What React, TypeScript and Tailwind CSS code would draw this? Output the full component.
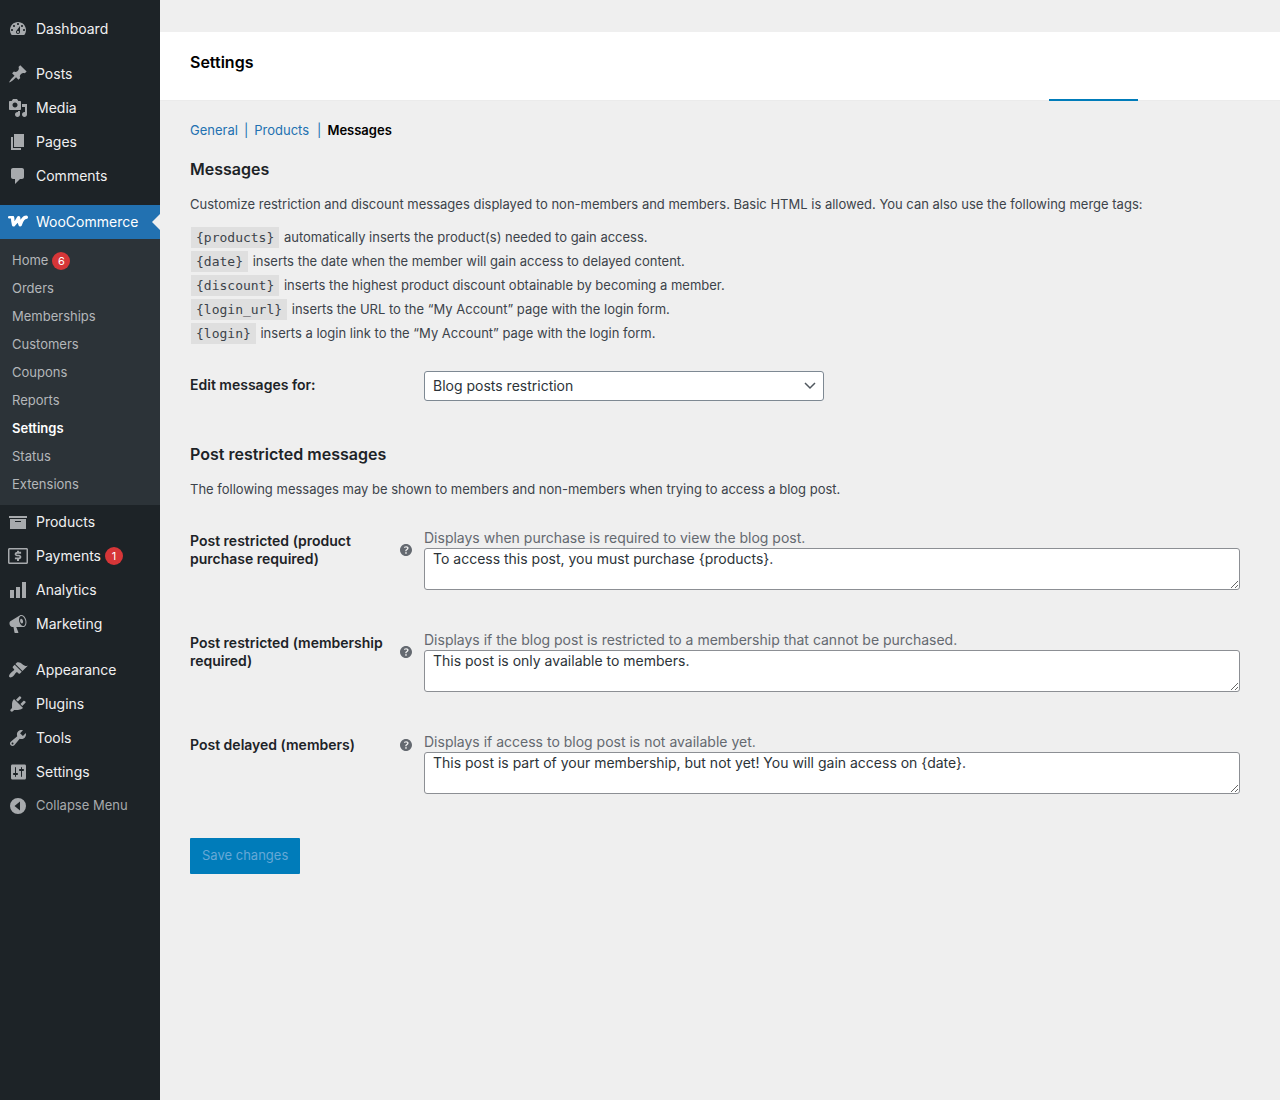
import React from "react";

const ICONS = {
  dashboard:
    "M3.76 16h12.48c1.1-1.37 1.76-3.11 1.76-5 0-4.42-3.58-8-8-8s-8 3.58-8 8c0 1.89.66 3.63 1.76 5zM10 4c.55 0 1 .45 1 1s-.45 1-1 1-1-.45-1-1 .45-1 1-1zM6 6c.55 0 1 .45 1 1s-.45 1-1 1-1-.45-1-1 .45-1 1-1zm8 0c.55 0 1 .45 1 1s-.45 1-1 1-1-.45-1-1 .45-1 1-1zm-5.37 5.55L12 7v6c0 1.1-.9 2-2 2s-2-.9-2-2c0-.57.24-1.08.63-1.45zM4 10c.55 0 1 .45 1 1s-.45 1-1 1-1-.45-1-1 .45-1 1-1zm12 0c.55 0 1 .45 1 1s-.45 1-1 1-1-.45-1-1 .45-1 1-1zm-5 3c0-.55-.45-1-1-1s-1 .45-1 1 .45 1 1 1 1-.45 1-1z",
  post: "M10.44 3.02l1.82-1.82 6.36 6.35-1.83 1.82c-1.05-.68-2.48-.57-3.41.36l-.75.75c-.92.93-1.04 2.35-.35 3.41l-1.83 1.82-2.41-2.41-2.8 2.79c-.42.42-3.38 2.71-3.8 2.29s1.86-3.39 2.28-3.81l2.79-2.79L4.1 9.36l1.83-1.82c1.05.69 2.48.57 3.4-.36l.75-.75c.93-.92 1.05-2.35.36-3.41z",
  media:
    "M13 11V4c0-.55-.45-1-1-1h-1.67L9 1H5L3.67 3H2c-.55 0-1 .45-1 1v7c0 .55.45 1 1 1h10c.55 0 1-.45 1-1zM7 4.5c1.38 0 2.5 1.12 2.5 2.5S8.38 9.5 7 9.5 4.5 8.38 4.5 7 5.62 4.5 7 4.5zM14 6h5v10.5c0 1.38-1.12 2.5-2.5 2.5S14 17.88 14 16.5s1.12-2.5 2.5-2.5c.17 0 .34.02.5.05V9h-3V6zm-4 8.05V13h2v3.5c0 1.38-1.12 2.5-2.5 2.5S7 17.88 7 16.5 8.12 14 9.5 14c.17 0 .34.02.5.05z",
  page: "M6 15V2h10v13H6zm-1 1h8v2H3V5h2v11z",
  comments: "M5 2h9c1.1 0 2 .9 2 2v7c0 1.1-.9 2-2 2h-2l-5 5v-5H5c-1.1 0-2-.9-2-2V4c0-1.1.9-2 2-2z",
  archive: "M19 4v2H1V4h18zM2 7h16v10H2V7zm11 3V9H7v1h6z",
  payments:
    "M1.5 2h17c.83 0 1.5.67 1.5 1.5v13c0 .83-.67 1.5-1.5 1.5h-17C.67 18 0 17.33 0 16.5v-13C0 2.67.67 2 1.5 2zm0 1.5v13h17v-13h-17zM9 4.800h2v1.050h2.100v1.800H9.100c-.45 0-.75.2-.75.5s.3.5.75.5h1.800c1.350 0 2.450.95 2.450 2.300 0 1.200-.9 2.150-2.100 2.250H11V15H9v-1.800H6.900v-1.800h4c.45 0 .7-.25.7-.55s-.3-.55-.7-.55H9.100c-1.350 0-2.450-.9-2.450-2.200 0-1.150.8-2.050 1.950-2.200H9V4.800z",
  chart: "M18 18V2h-4v16h4zm-6 0V7H8v11h4zm-6 0v-8H2v8h4z",
  megaphone:
    "M18.15 5.94c.46 1.62.38 3.22-.02 4.48-.42 1.28-1.26 2.18-2.3 2.48-.16.06-.26.06-.4.06-.06.02-.12.02-.18.02-.06.02-.14.02-.22.02h-6.8l2.22 5.5c.02.14-.06.26-.14.34-.08.1-.24.16-.34.16H6.95c-.1 0-.26-.06-.34-.16-.08-.08-.16-.2-.14-.34l-1-5.5H4.25l-.02-.02c-.5.06-1.08-.18-1.54-.62s-.88-1.08-1.06-1.88c-.24-.8-.2-1.56-.02-2.2.18-.62.58-1.08 1.06-1.3l.02-.02 9-5.4c.1-.06.18-.1.24-.16.06-.04.14-.08.24-.12.16-.08.28-.12.5-.18 1.04-.3 2.24.1 3.22.98s1.84 2.24 2.26 3.86zm-2.58 5.98h-.02c.4-.1.74-.34 1.04-.7.58-.7.86-1.76.86-3.04 0-.64-.1-1.3-.28-1.98-.34-1.36-1.02-2.5-1.78-3.24s-1.68-1.1-2.46-.88c-.82.22-1.4.96-1.7 2-.32 1.04-.28 2.36.06 3.72.38 1.36 1 2.5 1.8 3.24.78.74 1.62 1.1 2.48.88zm-2.54-7.08c.22-.04.42-.02.62.04.38.16.76.48 1.02 1s.42 1.2.42 1.78c0 .3-.04.56-.12.8-.18.48-.44.84-.86.94-.34.1-.8-.06-1.14-.4s-.64-.86-.78-1.5c-.18-.62-.12-1.24.02-1.72s.48-.84.82-.94z",
  appearance:
    "M14.48 11.06L7.41 3.99l1.5-1.5c.5-.56 2.3-.47 3.51.32 1.21.8 1.43 1.28 2.91 2.1 1.18.64 2.45 1.26 4.45.85zm-.71.71L6.7 4.7 4.93 6.47c-.39.39-.39 1.02 0 1.41l1.06 1.06c.39.39.39 1.03 0 1.42-.6.6-1.43 1.11-2.21 1.69-.35.26-.7.53-1.01.84C1.43 14.23.4 16.08 1.4 17.07c.99 1 2.84-.03 4.18-1.36.31-.31.58-.66.85-1.02.57-.78 1.08-1.61 1.69-2.21.39-.39 1.02-.39 1.41 0l1.06 1.06c.39.39 1.02.39 1.41 0z",
  plugins:
    "M13.11 4.36L9.87 7.6 8 5.73l3.24-3.24c.35-.34 1.05-.2 1.56.32.52.51.66 1.21.31 1.55zm-8 1.77l.91-1.12 9.01 9.01-1.19.84c-.71.71-2.63 1.16-3.82 1.16H6.14L4.9 17.26c-.59.59-1.54.59-2.12 0-.59-.58-.59-1.53 0-2.12l1.24-1.24v-3.88c0-1.13.4-3.19 1.09-3.89zm7.26 3.97l3.24-3.24c.34-.35 1.04-.21 1.55.31.52.51.66 1.21.31 1.55l-3.24 3.25z",
  tools:
    "M16.68 9.77c-1.34 1.34-3.3 1.67-4.95.99l-5.41 6.52c-.99.99-2.59.99-3.58 0s-.99-2.59 0-3.57l6.52-5.42c-.68-1.65-.35-3.61.99-4.95 1.28-1.28 3.12-1.62 4.72-1.06l-2.89 2.89 2.82 2.82 2.86-2.87c.53 1.58.18 3.39-1.08 4.65zM3.81 16.21c.4.39 1.04.39 1.43 0 .4-.4.4-1.04 0-1.43-.39-.4-1.03-.4-1.43 0-.39.39-.39 1.03 0 1.43z",
  settings:
    "M18 16V4c0-.8-.5-1.5-1.5-1.5h-12C3.5 2.5 3 3.2 3 4v12c0 .8.5 1.5 1.5 1.5h12c1 0 1.5-.7 1.5-1.5zM8 11h1c.55 0 1 .45 1 1s-.45 1-1 1H8v1.5c0 .28-.22.5-.5.5s-.5-.22-.5-.5V13H6c-.55 0-1-.45-1-1s.45-1 1-1h1V5.5c0-.28.22-.5.5-.5s.5.22.5.5V11zm5-2h-1c-.55 0-1-.45-1-1s.45-1 1-1h1V5.5c0-.28.22-.5.5-.5s.5.22.5.5V7h1c.55 0 1 .45 1 1s-.45 1-1 1h-1v5.5c0 .28-.22.5-.5.5s-.5-.22-.5-.5V9z",
  collapse: "M10 2a8 8 0 1 1 0 16 8 8 0 0 1 0-16zM12 5.5L6.5 10l5.5 4.5v-9z",
  help: "M17 10c0-3.87-3.14-7-7-7-3.87 0-7 3.13-7 7s3.13 7 7 7c3.86 0 7-3.13 7-7zm-6.3 1.48H9.14v-.43c0-.38.08-.7.24-.98s.46-.57.88-.89c.41-.29.68-.53.81-.71.14-.18.2-.39.2-.62 0-.25-.09-.44-.28-.58-.19-.13-.45-.19-.79-.19-.58 0-1.25.19-2 .57l-.64-1.28c.87-.49 1.8-.74 2.77-.74.81 0 1.45.2 1.92.58.48.39.71.91.71 1.55 0 .43-.09.8-.29 1.11-.19.32-.57.67-1.11 1.06-.38.28-.61.49-.71.63-.1.15-.15.34-.15.57v.35zm-1.47 2.74c-.18-.17-.27-.42-.27-.73 0-.33.08-.58.26-.75s.43-.25.77-.25c.32 0 .57.09.75.26s.27.42.27.74c0 .3-.09.55-.27.72-.18.18-.43.27-.75.27-.33 0-.58-.09-.76-.26z",
};

type IconName = keyof typeof ICONS;

function MenuIcon({ name }: { name: IconName }) {
  return (
    <svg viewBox="0 0 20 20" className="size-5 shrink-0 fill-[#a7aaad]" aria-hidden="true">
      <path fillRule="evenodd" d={ICONS[name]} />
    </svg>
  );
}

function WooLogo() {
  return (
    <svg viewBox="0 0 20 20" className="size-5 shrink-0" fill="none" stroke="#fff" strokeLinejoin="round" strokeLinecap="round" aria-hidden="true">
      <path d="M1.200 5.200h3.600" strokeWidth="2.400" />
      <path d="M4.600 5.600Q4.600 9 5.600 12.800Q8 11 10.600 5.800Q10.800 9.500 12.200 12.800Q13.200 9 15.200 6.800Q16.500 5.300 18.300 5.200" strokeWidth="3.400" />
    </svg>
  );
}

function Badge({ children }: { children: React.ReactNode }) {
  return (
    <span className="flex size-[18px] items-center justify-center rounded-full bg-[#d63638] text-[11px] leading-4 text-white">
      {children}
    </span>
  );
}

function MenuItem({ icon, label, badge }: { icon: IconName; label: string; badge?: string }) {
  return (
    <li>
      <a href="#" className="flex h-[34px] items-center gap-2 px-2 text-sm text-[#f0f0f1]">
        <MenuIcon name={icon} />
        <span className="flex items-center gap-1">
          {label}
          {badge && <Badge>{badge}</Badge>}
        </span>
      </a>
    </li>
  );
}

const SUBMENU = ["Home", "Orders", "Memberships", "Customers", "Coupons", "Reports", "Settings", "Status", "Extensions"];

function Sidebar() {
  return (
    <nav aria-label="Main menu" className="w-40 shrink-0 bg-[#1d2327] pt-3">
      <ul>
        <MenuItem icon="dashboard" label="Dashboard" />
      </ul>
      <ul className="mt-[11px]">
        <MenuItem icon="post" label="Posts" />
        <MenuItem icon="media" label="Media" />
        <MenuItem icon="page" label="Pages" />
        <MenuItem icon="comments" label="Comments" />
      </ul>
      <ul className="mt-3">
        <li>
          <a href="#" className="relative flex h-[34px] items-center gap-2 bg-[#2271b1] px-2 text-sm text-white">
            <WooLogo />
            WooCommerce
            <span className="absolute top-1/2 right-0 -translate-y-1/2 border-y-8 border-r-8 border-y-transparent border-r-[#efefef]" />
          </a>
          <ul className="bg-[#2c3338] pt-2 pb-1.5 text-[13px]">
            {SUBMENU.map((label) => (
              <li key={label}>
                <a
                  href="#"
                  className={`flex h-7 items-center gap-1 px-3 ${label === "Settings" ? "font-semibold text-white" : "text-[#b4b7ba]"}`}
                >
                  {label}
                  {label === "Home" && <Badge>6</Badge>}
                </a>
              </li>
            ))}
          </ul>
        </li>
        <MenuItem icon="archive" label="Products" />
        <MenuItem icon="payments" label="Payments" badge="1" />
        <MenuItem icon="chart" label="Analytics" />
        <MenuItem icon="megaphone" label="Marketing" />
      </ul>
      <ul className="mt-3">
        <MenuItem icon="appearance" label="Appearance" />
        <MenuItem icon="plugins" label="Plugins" />
        <MenuItem icon="tools" label="Tools" />
        <MenuItem icon="settings" label="Settings" />
      </ul>
      <button type="button" className="flex h-[34px] w-full items-center gap-2 px-2 text-[13px] text-[#a7aaad]">
        <MenuIcon name="collapse" />
        Collapse Menu
      </button>
    </nav>
  );
}

const TAGS = [
  ["{products}", "automatically inserts the product(s) needed to gain access."],
  ["{date}", "inserts the date when the member will gain access to delayed content."],
  ["{discount}", "inserts the highest product discount obtainable by becoming a member."],
  ["{login_url}", "inserts the URL to the “My Account” page with the login form."],
  ["{login}", "inserts a login link to the “My Account” page with the login form."],
];

const FIELDS = [
  {
    id: "purchase",
    label: "Post restricted (product purchase required)",
    hint: "Displays when purchase is required to view the blog post.",
    value: "To access this post, you must purchase {products}.",
  },
  {
    id: "membership",
    label: "Post restricted (membership required)",
    hint: "Displays if the blog post is restricted to a membership that cannot be purchased.",
    value: "This post is only available to members.",
  },
  {
    id: "delayed",
    label: "Post delayed (members)",
    hint: "Displays if access to blog post is not available yet.",
    value: "This post is part of your membership, but not yet! You will gain access on {date}.",
  },
];

export default function App() {
  return (
    <div className="flex min-h-screen bg-[#efefef] font-['Inter',sans-serif] text-[13px] text-[#3c434a]">
      <Sidebar />
      <div className="min-w-0 flex-1 pt-8">
        <header className="relative h-[69px] border-b border-[#ebebeb] bg-white px-[30px] pt-[18px]">
          <h1 className="text-base font-semibold text-black">Settings</h1>
          <span className="absolute right-[142px] -bottom-px h-0.5 w-[89px] bg-[#007cba]" />
        </header>
        <main className="pr-10 pb-10 pl-[30px]">
          <nav aria-label="Sections" className="flex pt-[19px] leading-5 text-[#2271b1]">
            <a href="#">General</a>
            <span className="mx-1.5">|</span>
            <a href="#">Products</a>
            <span className="mr-1.5 ml-2">|</span>
            <a href="#" aria-current="page" className="font-semibold text-black">Messages</a>
          </nav>
          <h2 className="mt-[17px] text-base leading-6 font-semibold text-[#1d2327]">Messages</h2>
          <p className="mt-[13px] leading-5">
            Customize restriction and discount messages displayed to non-members and members. Basic HTML is allowed. You can also use the following merge tags:
          </p>
          <ul className="mt-[11px]">
            {TAGS.map(([tag, text]) => (
              <li key={tag} className="h-6 leading-6">
                <code className="mx-px bg-[#dfdfdf] px-[5px] py-[3px] font-['DejaVu_Sans_Mono',monospace] text-[13px]">{tag}</code>{" "}
                {text}
              </li>
            ))}
          </ul>
          <div className="mt-[26px] flex">
            <label htmlFor="section" className="w-[234px] shrink-0 pt-1 text-sm leading-5 font-semibold text-[#1d2327]">
              Edit messages for:
            </label>
            <div className="relative w-[400px]">
              <select
                id="section"
                className="h-[30px] w-full appearance-none rounded-[3px] border border-[#7e8993] bg-white pr-6 pl-2 text-sm text-[#2c3338]"
              >
                <option>Blog posts restriction</option>
              </select>
              <svg viewBox="0 0 12 8" className="pointer-events-none absolute top-[11px] right-2 h-2 w-3" fill="none" stroke="#50575e" strokeWidth="1.5" aria-hidden="true">
                <path d="M1 1l5 5 5-5" />
              </svg>
            </div>
          </div>
          <h2 className="mt-[41px] text-base leading-6 font-semibold text-[#1d2327]">Post restricted messages</h2>
          <p className="mt-[13px] leading-5">
            The following messages may be shown to members and non-members when trying to access a blog post.
          </p>
          <div className="mt-[29px] flex flex-col gap-10">
            {FIELDS.map((f) => (
              <div key={f.id} className="flex items-start">
                <div className="flex w-[222px] shrink-0 items-center justify-between pt-1">
                  <label htmlFor={f.id} className="w-[200px] text-sm leading-[18px] font-semibold text-[#1d2327]">
                    {f.label}
                  </label>
                  <svg viewBox="3 3 14 14" className="size-3 shrink-0 fill-[#646970]" role="img" aria-label="Help">
                    <path d={ICONS.help} />
                  </svg>
                </div>
                <div className="ml-3 flex min-w-0 flex-1 flex-col">
                  <p id={`${f.id}-hint`} className="text-sm leading-5 text-[#646970]">{f.hint}</p>
                  <textarea
                    id={f.id}
                    aria-describedby={`${f.id}-hint`}
                    defaultValue={f.value}
                    className="h-[42px] w-full resize rounded-[3px] border border-[#8c8f94] bg-white px-2 text-sm leading-5 text-[#2c3338]"
                  />
                </div>
              </div>
            ))}
          </div>
          <button type="button" disabled className="mt-11 h-9 rounded-[1px] bg-[#007cba] px-3 text-[13px] text-[#66a8d6]">
            Save changes
          </button>
        </main>
      </div>
    </div>
  );
}
